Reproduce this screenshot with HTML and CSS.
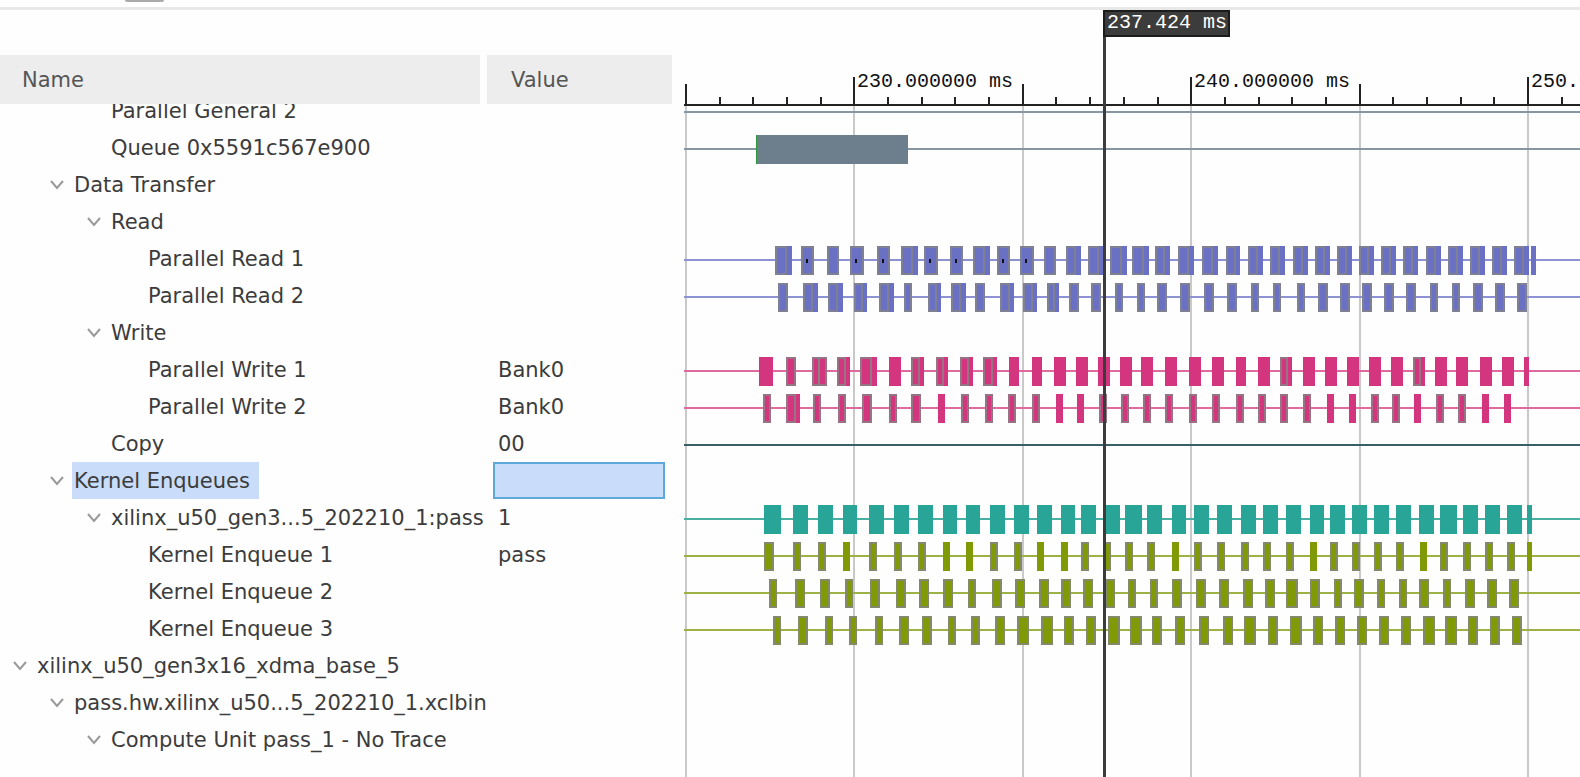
FILE: index.html
```html
<!DOCTYPE html>
<html lang="en">
<head>
<meta charset="utf-8">
<title>Timeline Trace</title>
<link rel="stylesheet" href="styles.css">
</head>
<body>
<header class="tabstrip"><span class="tab-marker"></span></header>
<main class="viewer">
  <section class="tree-panel">
    <table class="tree">
      <colgroup><col class="col-name"><col class="col-value"></colgroup>
      <thead>
        <tr><th scope="col">Name</th><th scope="col">Value</th></tr>
      </thead>
      <tbody id="rows"></tbody>
    </table>
  </section>
  <section class="chart" aria-label="Timeline">
    <svg class="grid" id="grid" aria-hidden="true"></svg>
    <svg class="ruler" id="ruler"></svg>
    <div class="lanes" id="lanes"></div>
    <div class="cursor"><span class="cursor-label">237.424 ms</span></div>
  </section>
</main>
<script src="timeline.js"></script>
</body>
</html>
```
FILE: styles.css
```css
* { box-sizing: border-box; }

body {
  margin: 0;
  height: 100vh;
  display: flex;
  flex-direction: column;
  overflow: hidden;
  background: #fefefe;
  color: #3c3c3c;
  font: 21px/39px "DejaVu Sans", sans-serif;
}

.tabstrip {
  flex: none;
  height: 10px;
  padding-left: 125px;
  border-bottom: 3px solid #e8e8e8;
}

.tab-marker {
  display: block;
  width: 39px;
  height: 2px;
  background: #ababab;
  border-radius: 0 0 2px 2px;
}

.viewer {
  flex: 1;
  min-height: 0;
  display: flex;
  gap: 12px;
}

.tree-panel {
  flex: none;
  width: 672px;
  padding-top: 45px;
}

.tree {
  width: 100%;
  table-layout: fixed;
  border-collapse: separate;
  border-spacing: 0;
}

.col-name { width: 487px; }

.tree th {
  height: 49px;
  padding: 2px 0 0 22px;
  background: #ededed;
  color: #555;
  font-weight: normal;
  text-align: left;
}

.tree th:first-child { border-right: 7px solid #fefefe; }
.tree th:last-child { padding-left: 24px; }
.tree td { height: 37px; padding: 0; }

.cell {
  display: flex;
  align-items: flex-start;
  height: 37px;
  white-space: nowrap;
}

.cut td,
.cut .cell { height: 25px; }

.cut .cell {
  align-items: flex-end;
  overflow: hidden;
}

.level-0 { padding-left: 13px; }
.level-1 { padding-left: 50px; }
.level-2 { padding-left: 87px; }
.level-3 { padding-left: 124px; }

.twisty {
  flex: none;
  width: 22px;
  height: 37px;
  padding: 0;
  border: 0;
  background: none;
}

.twisty svg {
  display: block;
  fill: none;
  stroke: #999;
  stroke-width: 2;
}

.label {
  height: 37px;
  padding-left: 2px;
}

.value {
  margin: 0 7px 0 6px;
  padding-left: 5px;
}

.selected .label {
  background: #c9ddfa;
  padding-right: 9px;
}

.selected .value {
  background: #c9ddfa;
  border: 2px solid #5fa8dc;
}

.chart {
  position: relative;
  flex: 1;
  min-width: 0;
  overflow: hidden;
}

.grid {
  position: absolute;
  inset: 96px 0 0;
  width: 100%;
  height: 100%;
}

.grid line {
  stroke: #c9c9c9;
  stroke-width: 2;
}

.ruler {
  display: block;
  position: relative;
  width: 100%;
  height: 94px;
  overflow: visible;
}

.ruler line {
  stroke: #222;
  stroke-width: 2;
}

.ruler text {
  fill: #111;
  font: 20px "Liberation Mono", monospace;
}

.lanes { position: relative; }

.lane {
  display: block;
  width: 100%;
  height: 37px;
}

.lane-cut {
  display: flex;
  align-items: flex-end;
  height: 25px;
  overflow: hidden;
}

.lane-cut .lane { flex: none; }

.lane .outline {
  stroke: #848484;
  stroke-width: 2;
  stroke-opacity: 0.8;
}

.slate { fill: #6d7f8c; stroke: #8697a3; }
.blue { fill: #6a70c4; stroke: #8d93d2; }
.pink { fill: #d4357f; stroke: #df6a9f; }
.deep { fill: #2f5d66; stroke: #3a5f68; }
.teal { fill: #28a596; stroke: #4aafa3; }
.olive { fill: #809a06; stroke: #9cb244; }
.lane rect { stroke: none; }
.lane line { stroke-width: 2; }
.start { fill: #2c9a3c; }
.dot { fill: #111; }

.cursor {
  position: absolute;
  top: 0;
  bottom: 0;
  left: 419px;
  border-left: 3px solid #3c3c3c;
}

.cursor-label {
  display: block;
  height: 27px;
  margin-left: -3px;
  padding: 0 1px 0 2px;
  border: 2px solid #1c1c1c;
  background: #3c3c3c;
  color: #fff;
  font: 20px/22px "Liberation Mono", monospace;
  white-space: nowrap;
}
```
FILE: timeline.js
```js
// Each event is "start:width" plus an optional kind:
// g outlined, s outlined part then solid part, d two outlined parts, o outlined with a dot.
const READ_1 = "775:17s 801:13o 827:12g 850:14o 877:13o 901:17s 924:14o 950:13o 973:17s 997:13o 1020:14o 1044:12g 1066:15s 1088:16s 1110:17s 1132:17s 1155:15s 1178:16s 1202:16s 1226:14s 1248:15s 1270:15s 1293:15s 1315:15s 1337:15s 1359:15s 1381:15s 1403:15s 1426:15s 1448:15s 1470:15s 1492:15s 1514:15s 1531:5";
const READ_2 = "778:10g 803:15s 828:15s 854:13s 879:15s 904:8g 928:13s 951:15s 975:10g 1000:14s 1023:14s 1047:12s 1069:10g 1091:10g 1115:8g 1137:8g 1157:10g 1180:10g 1204:10g 1227:10g 1251:8g 1273:8g 1297:8g 1318:10g 1340:10g 1362:10g 1384:10g 1406:10g 1430:8g 1452:8g 1473:10g 1495:10g 1517:10g";
const WRITE_1 = "759:14 786:10g 812:15d 837:13s 860:17s 889:12 911:13s 936:12s 960:13s 983:14s 1009:10 1032:10 1054:12 1076:12 1098:12 1120:12 1141:12 1165:12 1189:12 1212:12 1236:10 1258:12 1280:12s 1303:12 1325:12 1347:12 1369:12 1391:12 1413:12s 1435:12 1456:12 1480:12 1502:12 1524:5";
const WRITE_2 = "763:8g 786:14s 813:8g 838:8g 862:10g 889:8g 911:10g 938:7 961:8g 985:8g 1008:8g 1032:8g 1056:7 1077:7 1099:8g 1121:8g 1143:8g 1165:8g 1189:8g 1212:8g 1236:8g 1258:8g 1280:8g 1303:8g 1327:7 1349:7 1371:8g 1392:8g 1414:7 1436:8g 1458:8g 1482:7 1504:7";
const PASS = "764:17 793:15 818:15 843:14 869:15 894:15 918:15 943:14 966:14 990:15 1014:15 1037:15 1061:14 1081:15 1105:15 1125:17 1147:15 1172:14 1194:15 1217:15 1241:15 1263:15 1286:15 1310:14 1330:15 1352:15 1374:15 1396:15 1419:15 1440:17 1463:15 1485:15 1507:15 1527:5";
const ENQ_1 = "764:10g 793:8g 818:8g 843:7 869:8g 894:8g 918:8g 943:7 966:7 990:8g 1014:8g 1037:7 1061:7 1081:8g 1103:8g 1125:8g 1147:8g 1172:7 1194:8g 1217:8g 1241:8g 1263:8g 1286:8g 1310:7 1330:8g 1352:8g 1374:8g 1396:8g 1420:7 1440:8g 1463:8g 1485:8g 1507:8g 1527:5";
const ENQ_2 = "769:8g 795:10g 820:10g 845:8g 870:10g 896:10g 919:10g 943:10g 968:8g 992:10g 1015:10g 1039:10g 1061:10g 1083:10g 1105:10g 1128:8g 1150:8g 1172:10g 1196:10g 1219:10g 1243:10g 1265:10g 1286:12g 1310:10g 1334:8g 1354:10g 1377:8g 1399:8g 1419:10g 1443:8g 1465:10g 1487:10g 1509:10g";
const ENQ_3 = "773:8g 798:10g 825:8g 849:8g 875:8g 899:10g 922:10g 948:8g 971:9g 995:10g 1017:12g 1041:12g 1064:10g 1086:10g 1108:12g 1130:12g 1152:10g 1175:10g 1199:10g 1223:10g 1244:12g 1268:10g 1290:12g 1313:10g 1335:10g 1357:10g 1379:10g 1401:10g 1423:12g 1445:12g 1468:10g 1490:10g 1512:10g";

const ROWS = [
  { name: "Parallel General 2", level: 2, color: "slate", cut: true },
  { name: "Queue 0x5591c567e900", level: 2, color: "slate", events: "756:152", start: true },
  { name: "Data Transfer", level: 1, open: true },
  { name: "Read", level: 2, open: true },
  { name: "Parallel Read 1", level: 3, color: "blue", events: READ_1 },
  { name: "Parallel Read 2", level: 3, color: "blue", events: READ_2 },
  { name: "Write", level: 2, open: true },
  { name: "Parallel Write 1", value: "Bank0", level: 3, color: "pink", events: WRITE_1 },
  { name: "Parallel Write 2", value: "Bank0", level: 3, color: "pink", events: WRITE_2 },
  { name: "Copy", value: "00", level: 2, color: "deep" },
  { name: "Kernel Enqueues", level: 1, open: true, selected: true },
  { name: "xilinx_u50_gen3...5_202210_1:pass", value: "1", level: 2, open: true, color: "teal", events: PASS },
  { name: "Kernel Enqueue 1", value: "pass", level: 3, color: "olive", events: ENQ_1 },
  { name: "Kernel Enqueue 2", level: 3, color: "olive", events: ENQ_2 },
  { name: "Kernel Enqueue 3", level: 3, color: "olive", events: ENQ_3 },
  { name: "xilinx_u50_gen3x16_xdma_base_5", level: 0, open: true },
  { name: "pass.hw.xilinx_u50...5_202210_1.xclbin", level: 1, open: true },
  { name: "Compute Unit pass_1 - No Trace", level: 2, open: true }
];

const ORIGIN = 684;   // timeline units at the left edge of the chart
const BAR_TOP = 6;
const BAR_HEIGHT = 29;

function rect(cls, x, y, w, h) {
  return `<rect class="${cls}" x="${x}" y="${y}" width="${w}" height="${h}"/>`;
}

function outline(x, w) {
  return `<path class="outline" fill="none" d="M${x + 1} ${BAR_TOP + 1}h${w - 2}v${BAR_HEIGHT - 2}h${2 - w}z"/>`;
}

function drawEvent(item, color) {
  const [, start, width, kind] = item.match(/(\d+):(\d+)(\w?)/);
  const x = start - ORIGIN;
  const w = Number(width);
  const first = w - (w > 14 ? 5 : 4);
  let out = rect(color, x, BAR_TOP, w, BAR_HEIGHT);
  if (kind === "g" || kind === "o") out += outline(x, w);
  if (kind === "s") out += outline(x, first);
  if (kind === "d") out += outline(x, 8) + outline(x + 6, w - 6);
  if (kind === "o") out += rect("dot", x + 5, 19, 2, 4);
  return out;
}

function drawLane(row) {
  let body = "";
  if (row.color) {
    body += `<line class="${row.color}" x1="0" x2="100%" y1="20" y2="20"/>`;
    if (row.events) body += row.events.split(" ").map(e => drawEvent(e, row.color)).join("");
    if (row.start) body += rect("start", 72, BAR_TOP, 1, BAR_HEIGHT);
  }
  const svg = `<svg class="lane">${body}</svg>`;
  return row.cut ? `<div class="lane-cut">${svg}</div>` : svg;
}

function drawRow(row) {
  const twisty = row.open
    ? `<button class="twisty" aria-label="Collapse ${row.name}"><svg width="14" height="10"><path d="M1 1l6 7 6-7"/></svg></button>`
    : `<span class="twisty"></span>`;
  const state = (row.cut ? "cut " : "") + (row.selected ? "selected" : "");
  return `<tr class="${state}"><td><div class="cell level-${row.level}">${twisty}<span class="label">${row.name}</span></div></td>` +
    `<td><div class="cell value">${row.value || ""}</div></td></tr>`;
}

// One tick per millisecond, a longer one every 5 ms and a labelled one every 10 ms.
function drawScale() {
  let ticks = `<line x1="0" x2="100%" y1="95" y2="95"/>`;
  let grid = "";
  for (let ms = 225; ms <= 255; ms++) {
    const x = Math.round(2 + (ms - 225) * 33.68);
    const top = ms % 10 === 0 ? 67 : ms % 5 === 0 ? 74 : 87;
    ticks += `<line x1="${x}" x2="${x}" y1="${top}" y2="95"/>`;
    if (ms % 5 === 0) grid += `<line x1="${x}" x2="${x}" y1="0" y2="100%"/>`;
    if (ms % 10 === 0) ticks += `<text x="${x + 3}" y="77">${ms}.000000 ms</text>`;
  }
  document.getElementById("ruler").innerHTML = ticks;
  document.getElementById("grid").innerHTML = grid;
}

document.getElementById("rows").innerHTML = ROWS.map(drawRow).join("");
document.getElementById("lanes").innerHTML = ROWS.map(drawLane).join("");
drawScale();
```
